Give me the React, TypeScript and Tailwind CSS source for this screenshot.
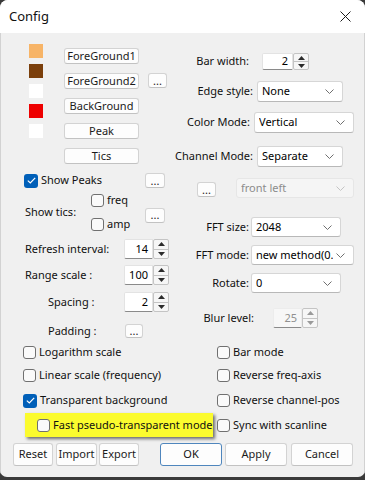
import React from 'react';

function Chevron({ disabled }: { disabled?: boolean }) {
  return (
    <svg width="9" height="5" viewBox="0 0 9 5" className="shrink-0">
      <path d="M0.5 0.5 L4.5 4.5 L8.5 0.5" fill="none" stroke={disabled ? '#c4c4c4' : '#6f6f6f'} strokeWidth="1" />
    </svg>
  );
}

function Btn({ className, children }: { className: string; children?: React.ReactNode }) {
  return (
    <div className={'flex items-center justify-center bg-[#fdfdfd] border border-[#d3d3d3] border-b-[#c2c2c2] rounded-[3px] text-[#1b1b1b] ' + className}>
      {children}
    </div>
  );
}

function Dots({ className }: { className: string }) {
  return <Btn className={'leading-none pb-[1px] ' + className}>...</Btn>;
}

function Check({ checked, className }: { checked?: boolean; className?: string }) {
  if (checked) {
    return (
      <div className={'w-[14px] h-[14px] rounded-[3px] bg-[#005fb8] flex items-center justify-center shrink-0 ' + (className || '')}>
        <svg width="9" height="7" viewBox="0 0 9 7">
          <path d="M0.8 3.6 L3.3 6 L8.2 0.8" fill="none" stroke="#fff" strokeWidth="1.2" />
        </svg>
      </div>
    );
  }
  return <div className={'w-[13px] h-[13px] rounded-[3px] border border-[#707070] bg-[#fafafa] shrink-0 ' + (className || '')} />;
}

function Select({ className, value, disabled }: { className: string; value: string; disabled?: boolean }) {
  return (
    <div
      className={
        'flex items-center rounded-[3px] border pl-[4px] pr-[8px] ' +
        (disabled ? 'bg-[#f5f5f5] border-[#e6e6e6] text-[#8c8c8c] ' : 'bg-white border-[#d6d6d6] border-b-[#b8b8b8] text-black ') +
        className
      }
    >
      <span className="flex-1 overflow-hidden whitespace-nowrap mr-[3px]">{value}</span>
      <Chevron disabled={disabled} />
    </div>
  );
}

function Spin({ className, value, disabled }: { className: string; value: string; disabled?: boolean }) {
  return (
    <div className={'flex ' + className}>
      <div
        className={
          'flex-1 flex items-center justify-end pr-[4px] border border-b-[#8a8a8a] rounded-l-[2px] ' +
          (disabled ? 'bg-[#f7f7f7] border-[#ececec] text-[#909090]' : 'bg-white border-[#e3e3e3] text-black')
        }
      >
        {value}
      </div>
      <div className="w-[16px] flex flex-col border border-[#c4c4c4] bg-[#f6f6f6] rounded-[2px]">
        <div className="flex-1 flex items-center justify-center border-b border-[#c4c4c4]">
          <svg width="7" height="4" viewBox="0 0 7 4">
            <path d="M0 4 L3.5 0 L7 4 Z" fill={disabled ? '#9a9a9a' : '#2b2b2b'} />
          </svg>
        </div>
        <div className="flex-1 flex items-center justify-center">
          <svg width="7" height="4" viewBox="0 0 7 4">
            <path d="M0 0 L3.5 4 L7 0 Z" fill={disabled ? '#9a9a9a' : '#2b2b2b'} />
          </svg>
        </div>
      </div>
    </div>
  );
}

function Option({ label, checked }: { label: string; checked?: boolean }) {
  return (
    <div className="flex items-center h-[13px]">
      <Check checked={checked} />
      <span className="ml-[3px] whitespace-nowrap">{label}</span>
    </div>
  );
}

export default function App() {
  const swatches = ['bg-[#f7b467]', 'bg-[#7b3f0b]', 'bg-white', 'bg-[#ee0000]', 'bg-white'];

  return (
    <div className="w-[365px] h-[480px] bg-[#3a3a3a] overflow-hidden font-['Noto_Sans','Open_Sans',sans-serif] text-[11px] text-[#111]">
      <div className="h-[477px] rounded-t-[8px] rounded-b-[7px] bg-[#f0f0f0] flex flex-col overflow-hidden">
        {/* title bar */}
        <div className="h-[33px] bg-white flex items-center justify-between pl-[9px] pr-[14px] shrink-0">
          <span className="text-[13px] text-[#111]">Config</span>
          <svg width="11" height="11" viewBox="0 0 11 11">
            <path d="M0.5 0.5 L10.5 10.5 M10.5 0.5 L0.5 10.5" stroke="#1c1c1c" strokeWidth="1" />
          </svg>
        </div>

        <div className="flex-1 flex flex-col border-x border-[#d2d2d2]">
          {/* two column settings */}
          <div className="flex">
            {/* left column */}
            <div className="w-[172px] flex flex-col">
              <div className="flex pt-[11px]">
                <div className="ml-[28px] flex flex-col gap-[6px]">
                  {swatches.map((c, i) => (
                    <div key={i} className={'w-[14px] h-[14px] ' + c} />
                  ))}
                </div>
                <div className="ml-[21px] mt-[4px] flex flex-col gap-[9px]">
                  <Btn className="w-[75px] h-[16px]">ForeGround1</Btn>
                  <Btn className="w-[75px] h-[16px]">ForeGround2</Btn>
                  <Btn className="w-[75px] h-[16px]">BackGround</Btn>
                  <Btn className="w-[75px] h-[16px]">Peak</Btn>
                  <Btn className="w-[75px] h-[16px]">Tics</Btn>
                </div>
                <div className="ml-[9px] mt-[29px]">
                  <Dots className="w-[19px] h-[15px]" />
                </div>
              </div>

              <div className="flex items-center justify-between mt-[9px] h-[15px] pl-[23px] pr-[8px]">
                <div className="flex items-center">
                  <Check checked />
                  <span className="ml-[3px]">Show Peaks</span>
                </div>
                <Dots className="w-[20px] h-[15px]" />
              </div>

              <div className="flex items-center mt-[6px] h-[37px] pl-[24px] pr-[8px]">
                <span className="w-[66px]">Show tics:</span>
                <div className="flex flex-col gap-[11px]">
                  <Option label="freq" />
                  <Option label="amp" />
                </div>
                <div className="flex-1" />
                <Dots className="w-[20px] h-[15px] mt-[5px]" />
              </div>

              <div className="flex items-center mt-[8px] pl-[24px]">
                <span className="w-[99px]">Refresh interval:</span>
                <Spin className="w-[45px] h-[20px]" value="14" />
              </div>
              <div className="flex items-center mt-[6px] pl-[24px]">
                <span className="w-[99px]">Range scale :</span>
                <Spin className="w-[45px] h-[20px]" value="100" />
              </div>
              <div className="flex items-center mt-[7px] pl-[47px]">
                <span className="w-[76px]">Spacing :</span>
                <Spin className="w-[45px] h-[20px]" value="2" />
              </div>
              <div className="flex items-center mt-[12px] h-[14px] pl-[47px]">
                <span className="w-[77px]">Padding :</span>
                <Dots className="w-[18px] h-[14px]" />
              </div>
            </div>

            {/* right column */}
            <div className="flex-1 flex flex-col pt-[20px]">
              <div className="flex items-center">
                <span className="w-[76px] text-right">Bar width:</span>
                <Spin className="ml-[13px] w-[47px] h-[17px]" value="2" />
              </div>
              <div className="flex items-center mt-[11px]">
                <span className="w-[84px] text-right pr-[4px]">Edge style:</span>
                <Select className="w-[86px] h-[21px]" value="None" />
              </div>
              <div className="flex items-center mt-[10px]">
                <span className="w-[81px] text-right pr-[4px]">Color Mode:</span>
                <Select className="w-[100px] h-[21px]" value="Vertical" />
              </div>
              <div className="flex items-center mt-[13px]">
                <span className="w-[84px] text-right pr-[4px] whitespace-nowrap">Channel Mode:</span>
                <Select className="w-[86px] h-[21px]" value="Separate" />
              </div>
              <div className="flex items-center mt-[11px]">
                <Dots className="ml-[24px] w-[19px] h-[15px] mt-[3px]" />
                <Select className="ml-[20px] w-[118px] h-[20px]" value="front left" disabled />
              </div>
              <div className="flex items-center mt-[19px]">
                <span className="w-[78px] text-right pr-[2px]">FFT size:</span>
                <Select className="w-[90px] h-[20px]" value="2048" />
              </div>
              <div className="flex items-center mt-[8px]">
                <span className="w-[78px] text-right pr-[2px]">FFT mode:</span>
                <Select className="w-[103px] h-[20px]" value="new method(0.5)" />
              </div>
              <div className="flex items-center mt-[8px]">
                <span className="w-[78px] text-right pr-[2px]">Rotate:</span>
                <Select className="w-[90px] h-[20px]" value="0" />
              </div>
              <div className="flex items-center mt-[15px]">
                <span className="w-[81px] text-right">Blur level:</span>
                <Spin className="ml-[19px] w-[45px] h-[20px]" value="25" disabled />
              </div>
            </div>
          </div>

          {/* checkbox options */}
          <div className="flex flex-col mt-[8px]">
            <div className="flex items-center h-[13px]">
              <div className="w-[216px] pl-[22px]">
                <Option label="Logarithm scale" />
              </div>
              <Option label="Bar mode" />
            </div>
            <div className="flex items-center h-[13px] mt-[10px]">
              <div className="w-[216px] pl-[22px]">
                <Option label="Linear scale (frequency)" />
              </div>
              <Option label="Reverse freq-axis" />
            </div>
            <div className="flex items-center h-[13px] mt-[12px]">
              <div className="w-[216px] pl-[22px]">
                <Option label="Transparent background" checked />
              </div>
              <Option label="Reverse channel-pos" />
            </div>
            <div className="flex items-center h-[24px] mt-[6px]">
              <div className="w-[216px] pl-[24px]">
                <div className="w-[188px] h-[24px] bg-[#fbfb2e] flex items-center pl-[12px] shadow-[2px_2px_3px_rgba(0,0,0,0.55)]">
                  <Option label="Fast pseudo-transparent mode" />
                </div>
              </div>
              <Option label="Sync with scanline" />
            </div>
          </div>

          {/* dialog buttons */}
          <div className="flex items-center mt-[6px] pl-[12px]">
            <Btn className="w-[40px] h-[23px]">Reset</Btn>
            <Btn className="ml-[3px] w-[41px] h-[23px]">Import</Btn>
            <Btn className="ml-[2px] w-[40px] h-[23px]">Export</Btn>
            <div className="ml-[21px] w-[62px] h-[23px] flex items-center justify-center bg-[#fdfdfd] border border-[#4f86bd] rounded-[3px]">OK</div>
            <Btn className="ml-[3px] w-[62px] h-[23px]">Apply</Btn>
            <Btn className="ml-[4px] w-[62px] h-[23px]">Cancel</Btn>
          </div>
        </div>
      </div>
    </div>
  );
}
